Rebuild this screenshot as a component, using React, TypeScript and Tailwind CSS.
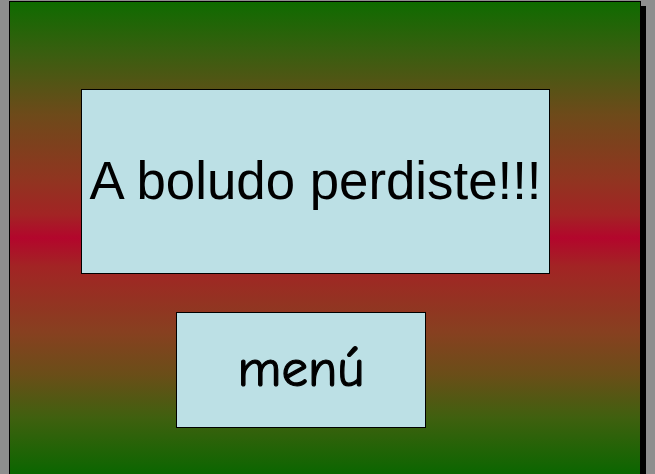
import React from "react";

export default function App() {
  return (
    <div className="w-[655px] h-[474px] overflow-hidden bg-[#8e8e8e] pl-[9px] pt-[1px]">
      <div className="w-[632px] h-[474px] border border-black shadow-[5px_5px_0_#000] bg-[linear-gradient(to_bottom,#0f6b00_0%,#3a5e10_11%,#6e4a1a_24%,#8f3620_37%,#a22424_45%,#b3062c_50%,#a22424_56%,#874020_70%,#6a4e18_79%,#40600f_88%,#0b6600_100%)] pt-[87px] pl-[71px] flex flex-col">
        <div className="w-[469px] h-[185px] border border-black bg-[#bce0e5] flex items-center justify-center">
          <span className="text-[52.8px] leading-none text-black whitespace-nowrap" style={{ fontFamily: '"Liberation Sans", Arial, sans-serif' }}>
            A boludo perdiste!!!
          </span>
        </div>
        <div className="ml-[95px] mt-[38px] w-[250px] h-[116px] border border-black bg-[#bce0e5] flex items-center justify-center">
          <span className="text-[53px] font-normal leading-none text-black pb-[4px] [-webkit-text-stroke:1.2px_black]" style={{ fontFamily: '"Comic Sans MS", "Comic Neue", cursive' }}>
            menú
          </span>
        </div>
      </div>
    </div>
  );
}
